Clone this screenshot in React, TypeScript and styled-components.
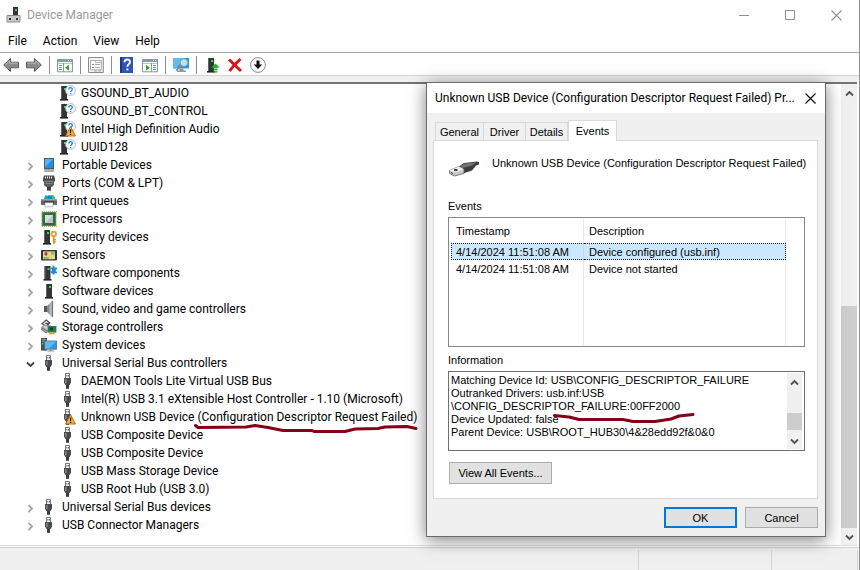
import React, { useState } from "react";
import styled, { createGlobalStyle } from "styled-components";

const UI_FONT = 'Roboto, "Open Sans", sans-serif';
const DIALOG_FONT = '"Liberation Sans", Arial, sans-serif';

const GlobalStyle = createGlobalStyle`
  * { box-sizing: border-box; }
  body { margin: 0; background: #fff; color: #000; font-family: ${UI_FONT}; font-size: 12px; }
  button, textarea, table { font: inherit; color: inherit; }
  svg { display: block; flex: none; }
`;

/* ---------- main window ---------- */

const Window = styled.main`
  position: relative;
  display: flex;
  flex-direction: column;
  min-height: 100vh;
  border-right: 1px solid #8f8f8f;
  overflow: hidden;
`;

const TitleBar = styled.header`
  display: flex;
  align-items: center;
  height: 30px;
  padding-left: 6px;
  gap: 5px;
`;

const AppTitle = styled.h1`
  flex: 1;
  margin: 0;
  font-size: 12px;
  font-weight: 400;
  color: #999;
`;

const CaptionButtons = styled.div`
  display: flex;
`;

const CaptionButton = styled.button`
  display: grid;
  place-items: center;
  width: 46px;
  height: 28px;
  padding: 0;
  border: 0;
  background: none;
  color: #909090;
`;

const MenuBar = styled.nav`
  display: flex;
  align-items: center;
  height: 22px;
  padding-left: 8px;
  gap: 16px;
`;

const MenuButton = styled.button`
  padding: 0;
  border: 0;
  background: none;
  line-height: 16px;
`;

const ToolBar = styled.div`
  display: flex;
  align-items: center;
  height: 24px;
  padding: 2px 0 0 3px;
  gap: 7px;
  border-top: 1px solid #a6a6a6;
  border-bottom: 1px solid #d4d4d4;
`;

const ToolButton = styled.button`
  width: 16px;
  height: 18px;
  padding: 1px 0;
  border: 0;
  background: none;
`;

const ToolSeparator = styled.span`
  width: 1px;
  height: 18px;
  background: #8c8c8c;
`;

const Content = styled.section`
  display: flex;
  flex: 1;
  margin-right: 2px;
  border-top: 2px solid #747474;
  border-bottom: 1px solid #dcdcdc;
`;

const Rebar = styled.div`
  height: 6px;
  background: #f0f0f0;
`;

const Tree = styled.ul`
  flex: 1;
  min-width: 0;
  margin: 0;
  padding: 0 0 11px;
  list-style: none;
`;

const TreeItem = styled.li<{ $child?: boolean }>`
  display: flex;
  align-items: center;
  height: 18px;
  padding-left: ${(p) => (p.$child ? 60 : 24)}px;
  white-space: nowrap;
  line-height: 18px;
`;

const Expander = styled.button`
  display: grid;
  place-items: center;
  width: 12px;
  height: 16px;
  margin-right: 5px;
  padding: 2px 0 0;
  border: 0;
  background: none;
`;

const ItemLabel = styled.span`
  position: relative;
  padding-left: 5px;
`;

const InkMark = styled.svg<{ $left: number; $top: number }>`
  position: absolute;
  left: ${(p) => p.$left}px;
  top: ${(p) => p.$top}px;
  overflow: visible;
  pointer-events: none;
  z-index: 1;
`;

const ScrollBar = styled.div<{ $dialog?: boolean }>`
  display: flex;
  flex-direction: column;
  width: ${(p) => (p.$dialog ? 15 : 16)}px;
  background: #f0f0f0;
`;

const ScrollArrow = styled.button`
  display: grid;
  place-items: center;
  height: 17px;
  padding: 2px 0 0;
  border: 0;
  background: none;
`;

const ScrollTrack = styled.div<{ $before: number; $after?: number }>`
  display: flex;
  flex: 1;
  flex-direction: column;
  &::before { content: ""; flex: ${(p) => p.$before} 0 0; }
  &::after { content: ""; flex: ${(p) => p.$after ?? 0} 0 0; }
`;

const ScrollThumb = styled.div<{ $size: number }>`
  flex: ${(p) => p.$size} 0 0;
  background: #cdcdcd;
`;

const StatusBar = styled.footer`
  display: grid;
  grid-template-columns: 1fr 133px 86px;
  height: 24px;
  margin-top: 1px;
  padding: 2px 1px 0 0;
  border-top: 1px solid #d0d0d0;
  background: #f0f0f0;
`;

const StatusPane = styled.div`
  border-right: 1px solid #d4d4d4;
`;

/* ---------- properties dialog ---------- */

const Dialog = styled.section`
  position: absolute;
  top: 82px;
  right: 33px;
  width: 400px;
  border: 1px solid #6b6b6b;
  background: #f0f0f0;
  box-shadow: 0 3px 16px rgba(0, 0, 0, 0.5);
  font-family: ${DIALOG_FONT};
  font-size: 11px;
`;

const DialogTitleBar = styled.header`
  display: flex;
  align-items: center;
  height: 30px;
  padding-left: 8px;
  background: #fff;
  font-family: ${UI_FONT};
`;

const DialogTitle = styled.h2`
  flex: 1;
  margin: 0;
  font-size: 12px;
  font-weight: 400;
  white-space: nowrap;
`;

const DialogClose = styled.button`
  display: grid;
  place-items: center;
  width: 30px;
  height: 28px;
  padding: 0;
  border: 0;
  background: none;
  color: #000;
`;

const DialogBody = styled.div`
  padding: 7px 7px 8px 6px;
`;

const Tabs = styled.div`
  display: flex;
  align-items: flex-end;
  height: 20px;
  padding-left: 2px;
`;

const Tab = styled.button<{ $active: boolean; $wide?: boolean }>`
  position: relative;
  width: ${(p) => (p.$active || p.$wide ? 49 : 42)}px;
  height: ${(p) => (p.$active ? 21 : 18)}px;
  margin-bottom: ${(p) => (p.$active ? -1 : 0)}px;
  padding: 0;
  border: 1px solid #d9d9d9;
  border-bottom: 0;
  border-left-width: ${(p) => (p.$active || p.$wide ? 1 : 0)}px;
  background: ${(p) => (p.$active ? "#fff" : "#f0f0f0")};
  white-space: nowrap;
`;

const TabPanel = styled.div`
  padding: 14px 12px 14px 14px;
  border: 1px solid #d9d9d9;
  background: #fff;
`;

const DeviceHeader = styled.div`
  display: flex;
  gap: 12px;
  height: 44px;
`;

const DeviceName = styled.p`
  margin: 0;
  line-height: 16px;
  white-space: nowrap;
`;

const FieldLabel = styled.label`
  display: block;
  height: 18px;
  line-height: 14px;
`;

const EventsBox = styled.div`
  height: 130px;
  margin-bottom: 6px;
  padding: 1px 0 1px 2px;
  border: 1px solid #828790;
`;

const EventsTable = styled.table`
  width: 100%;
  height: 100%;
  border-collapse: separate;
  border-spacing: 0;
  table-layout: fixed;
  th, td {
    padding: 0 0 0 5px;
    text-align: left;
    font-weight: 400;
    white-space: nowrap;
    vertical-align: middle;
  }
  th:not(:last-child), td:not(:last-child) { border-right: 1px solid #e5ebf2; }
`;

const HeadRow = styled.tr`
  height: 24px;
`;

const EventRow = styled.tr<{ $selected: boolean }>`
  height: 17px;
  td:not(:last-child) {
    background: ${(p) => (p.$selected ? "#cce8ff" : "none")};
    ${(p) => p.$selected && "border-top: 1px dotted #222; border-bottom: 1px dotted #222;"}
  }
  td:first-child { ${(p) => p.$selected && "border-left: 1px dotted #222; padding-left: 4px; border-right-color: #b8dcfa;"} }
  td:nth-child(2) { ${(p) => p.$selected && "border-right: 1px dotted #222;"} }
`;

const InfoBox = styled.div`
  position: relative;
  display: flex;
  height: 80px;
  margin-bottom: 11px;
  padding: 1px 2px 1px 0;
  border: 1px solid #6f6f6f;
`;

const InfoText = styled.textarea`
  flex: 1;
  min-width: 0;
  margin: 0;
  padding: 1px 2px;
  border: 0;
  outline: 0;
  resize: none;
  overflow: hidden;
  background: none;
  line-height: 13px;
  white-space: pre;
`;

const PushButton = styled.button<{ $default?: boolean; $wide?: boolean }>`
  width: ${(p) => (p.$wide ? 103 : 73)}px;
  height: ${(p) => (p.$wide ? 22 : 21)}px;
  margin-left: ${(p) => (p.$wide ? 1 : 0)}px;
  padding: 0;
  border: ${(p) => (p.$default ? "2px solid #0078d7" : "1px solid #adadad")};
  background: #e1e1e1;
`;

const DialogActions = styled.footer`
  display: flex;
  justify-content: flex-end;
  gap: 8px;
  padding-top: 8px;
`;

/* ---------- icons ---------- */

const Icon = ({ children, size = 16 }: { children: React.ReactNode; size?: number }) => (
  <svg width={size} height={size} viewBox="0 0 16 16" aria-hidden="true">{children}</svg>
);

const Tower = ({ x = 0 }: { x?: number }) => (
  <g transform={`translate(${x} 0)`}>
    <path d="M1 1h6v13H1z" fill="#343434" />
    <path d="M1 1h1v13H1z" fill="#666" />
    <path d="M0 14h8v1.6H0z" fill="#242424" />
    <path d="M4 3h2v2H4z" fill="#2fe04a" />
  </g>
);

const WarningBadge = () => (
  <g>
    <path d="M10.5 5.6l5 9.4h-10z" fill="#f8b32b" stroke="#a06a10" strokeWidth=".9" strokeLinejoin="round" />
    <path d="M9.8 8.6h1.5l-.3 3.4h-.9zM9.8 12.7h1.5V14H9.8z" fill="#1b1208" />
  </g>
);

const QuestionBadge = () => (
  <g>
    <circle cx="10.5" cy="5.5" r="4.9" fill="#fff" stroke="#a9b0b6" strokeWidth=".9" />
    <path d="M8.8 4.4c0-2.3 3.5-2.3 3.5-.1 0 1.4-1.7 1.3-1.7 2.7" fill="none" stroke="#1b7fd0" strokeWidth="1.3" />
    <path d="M9.9 7.9h1.4v1.3H9.9z" fill="#1b7fd0" />
  </g>
);

const UsbPlug = () => (
  <g>
    <path d="M5.5.5h4v5h-4z" fill="#f4f4f4" stroke="#777" />
    <path d="M6.5 2h.8v1.4h-.8zM8 2h.8v1.4H8z" fill="#444" />
    <path d="M4 5h7v4.5L9.6 12H5.4L4 9.5z" fill="#4b4b4b" />
    <path d="M5 6h1.6v4H5z" fill="#858585" />
    <path d="M6 12h3v3.8H6z" fill="#3b3b3b" />
  </g>
);

type IconName =
  | "unknown" | "unknownWarn" | "portable" | "ports" | "printer" | "cpu" | "security" | "sensor"
  | "component" | "software" | "sound" | "storage" | "system" | "usb" | "usbWarn";

const icons: Record<IconName, React.ReactNode> = {
  unknown: <><Tower /><QuestionBadge /></>,
  unknownWarn: <><Tower /><QuestionBadge /><WarningBadge /></>,
  portable: (
    <>
      <path d="M3 1h10v14H3z" fill="#53585c" />
      <path d="M4 2h8v9H4z" fill="#1f8fe8" />
      <path d="M4 2h8L4 10z" fill="#52b4fa" />
      <path d="M3 12h10v3H3z" fill="#b5b8ba" />
      <path d="M5 12v3M8 12v3M11 12v3" stroke="#83878a" strokeWidth=".7" />
    </>
  ),
  ports: (
    <>
      <path d="M3 .5h10l1 3v3H2v-3z" fill="#4a4a4a" />
      <path d="M4.500 1.500v2M6.500 1.500v2M8.500 1.500v2M10.500 1.500v2" stroke="#e4e4e4" />
      <path d="M3 5h10v5l-2 2H5l-2-2z" fill="#5b5b5b" />
      <path d="M4 6.500h8M4 8.500h8" stroke="#8b8b8b" strokeWidth=".8" />
      <path d="M6 12h4v3.600H6z" fill="#3d3d3d" />
    </>
  ),
  printer: (
    <>
      <path d="M4 2.600h9l1 3.400H3z" fill="#13a9b8" />
      <path d="M7 2.600h4V6H7z" fill="#1683e0" />
      <path d="M11 2.600h2l1 3.400h-3z" fill="#52c832" />
      <path d="M0 6h16v6H0z" fill="#66686a" />
      <path d="M0 6h16v1.400H0z" fill="#9ea1a3" />
      <path d="M3 8.500h10V10H3z" fill="#27292a" />
      <path d="M4 9.600h8v4.200H4z" fill="#fff" stroke="#8c8c8c" strokeWidth=".6" />
    </>
  ),
  cpu: (
    <>
      <path d="M.8.8h14.400v14.400H.8z" fill="none" stroke="#c99d38" strokeWidth="1.400" strokeDasharray="1 1" />
      <path d="M1.200 1.200h13.600v13.600H1.200z" fill="#2c6a49" />
      <path d="M4 4h8v8H4z" fill="#d9dddb" />
      <path d="M4 12l8-8v8z" fill="#bcc3c0" />
    </>
  ),
  security: (
    <>
      <Tower x={2} />
      <circle cx="12.700" cy="5" r="2.300" fill="none" stroke="#e2a33c" strokeWidth="1.900" />
      <path d="M11.800 7.500h1.900v7l-.9 1-.9-1zM13.700 10h1.300v1.300h-1.300zM13.700 12.200h1.300v1.300h-1.300z" fill="#d8942d" />
    </>
  ),
  sensor: (
    <>
      <rect y="3" width="16" height="10.600" rx="1" fill="#343434" />
      <path d="M2 4.400h12v7.800H2z" fill="#d8dba0" />
      <path d="M10 4.800h3.600v3H10zM2.400 10h5.400v2H2.400z" fill="#8fbc77" />
      <path d="M2 9h12M9 4.400v7.800" stroke="#f2cf6b" strokeWidth="1.200" />
      <path d="M5 5.200c2.200 0 2 2 0 4-2-2-2.200-4 0-4z" fill="#c33434" />
    </>
  ),
  component: (
    <>
      <Tower x={2.5} />
      <path d="M9.500 2.400h2V.8h2v1.600H16v2h-1.200v2H16v1.900h-2.400V9.500h-2V8.300h-2v-2h1.200v-2H9.500z" fill="#2489d6" />
    </>
  ),
  software: <Tower x={4} />,
  sound: (
    <>
      <path d="M3 5h3v6H3z" fill="#55595c" />
      <path d="M6 5l5-4.700v15.400L6 11z" fill="#85898d" />
      <path d="M8.400 2.800L11 .3v15.400l-2.600-2.500z" fill="#b5b8ba" />
      <path d="M11.500 0v16" stroke="#707477" strokeWidth="1.200" />
    </>
  ),
  storage: (
    <>
      <path d="M1 4.700L5.200 1l3.400 2.800L5 7.200z" fill="#f5f5f5" stroke="#4b4b4b" strokeWidth="1.200" />
      <path d="M4.200 4.300h4L6.500 6" fill="none" stroke="#4b4b4b" strokeWidth="1.200" />
      <path d="M.6 8.500l5.700 3.600L5.400 14 .6 11z" fill="#a4a6a7" stroke="#525252" strokeWidth=".7" />
      <path d="M1 8l3-2 6 1v4l-3 1z" fill="#cfd1d2" stroke="#666" strokeWidth=".6" />
      <path d="M6.600 7h8.800v6.600H6.600z" fill="#2c7b54" />
      <path d="M9 8.600h3v2.600H9z" fill="#173c2b" />
      <path d="M7.800 13.500h5.800v1.800H7.800z" fill="#e0a52d" />
    </>
  ),
  system: (
    <>
      <path d="M0 1h6v12.600H0z" fill="#4b4f52" />
      <path d="M1 2.400h4M1 4.400h4" stroke="#b3b7b9" strokeWidth=".8" />
      <path d="M1 6h1.400v1.400H1z" fill="#31d44a" />
      <path d="M3.500 4h12.300v8.200H3.500z" fill="#2f97e8" stroke="#5b666d" strokeWidth=".8" />
      <path d="M4 4.500h11L7.500 11.800H4z" fill="#5dbaf8" />
      <path d="M8.700 12.400h2v1.200h2.500v.9H6.200v-.9h2.500z" fill="#8c9194" />
    </>
  ),
  usb: <UsbPlug />,
  usbWarn: <><UsbPlug /><WarningBadge /></>,
};

const Chevron = ({ dir, color = "#505050" }: { dir: "up" | "down" | "right"; color?: string }) => (
  <svg width="9" height="9" viewBox="0 0 9 9" aria-hidden="true">
    <path
      d={{ up: "M1 6.5L4.5 3 8 6.5", down: "M1 2.5L4.5 6 8 2.5", right: "M2.5 1L6 4.5 2.5 8" }[dir]}
      fill="none" stroke={color} strokeWidth="1.8"
    />
  </svg>
);

const CloseGlyph = () => (
  <svg width="11" height="11" viewBox="0 0 11 11" aria-hidden="true">
    <path d="M.5.5l10 10M10.5.5l-10 10" stroke="currentColor" strokeWidth="1.1" />
  </svg>
);

const Arrow = ({ flip }: { flip?: boolean }) => (
  <Icon>
    <g transform={flip ? "translate(16 0) scale(-1 1)" : undefined}>
      <path d="M.7 8L7.500 1.500v3.700h8v5.600h-8v3.700z" fill="#8b8b8b" stroke="#5a5a5a" strokeLinejoin="round" />
      <path d="M2.400 7.700L6.600 3.800v2.400h8" fill="none" stroke="#b9b9b9" />
    </g>
  </Icon>
);

const PaneWindow = ({ flip }: { flip?: boolean }) => (
  <Icon>
    <path d="M.5 2.500h15v12.300H.5z" fill="#fff" stroke="#8796a4" />
    <path d="M.5 2h15v3H.5z" fill="#8b98a5" />
    <path d="M11 3.500h1M13 3.500h1" stroke="#fff" />
    <path d="M1 6.500h14" stroke="#b9c3cc" />
    <g transform={flip ? "translate(16 0) scale(-1 1)" : undefined}>
      <path d="M6.500 6v8.500" stroke="#8796a4" />
      <path d="M2 8.500h3M2 10.500h3M2 12.500h3" stroke="#6f93b5" />
      <path d="M12 7.700v6L8 10.700z" fill="#3aa32b" />
    </g>
  </Icon>
);

const toolIcons = {
  properties: (
    <Icon>
      <path d="M.5.5h14.800v15H.5z" fill="#f3f3f3" stroke="#8b8b8b" />
      <path d="M2.500 3.500h10.800v9.300H2.500z" fill="#fff" stroke="#a8adb2" />
      <path d="M2.500 3.500h5v2h6" fill="none" stroke="#a9b0b6" />
      <path d="M4 7.500h2M4 10.500h2" stroke="#5d93c4" strokeWidth="1.200" />
      <path d="M7 7.500h5M7 10.500h5" stroke="#a5a5a5" />
      <path d="M6 14h3M10 14h3" stroke="#9f9f9f" />
    </Icon>
  ),
  help: (
    <Icon>
      <path d="M1 0h13v16H1z" fill="#2f55b4" />
      <path d="M1 0h2v16H1z" fill="#1e3a87" />
      <path d="M5.600 5.200c0-3.600 5.400-3.500 5.400-.3 0 2.300-2.600 2.300-2.600 4.900" fill="none" stroke="#fff" strokeWidth="1.900" />
      <path d="M7.400 11.400h2v2h-2z" fill="#fff" />
    </Icon>
  ),
  scan: (
    <Icon>
      <path d="M0 1h16v10.400H0z" fill="#2c92dc" />
      <path d="M0 1h12L3 11.400H0z" fill="#66b9ef" />
      <path d="M6.500 11.400h4v2.200h2.500V15H4v-1.400h2.500z" fill="#8c98a0" />
      <circle cx="11" cy="5.600" r="3.900" fill="#b8e1fa" stroke="#7a99ad" />
      <path d="M8.200 8.400l-5 5.200" stroke="#7b8a94" strokeWidth="1.700" />
    </Icon>
  ),
  update: (
    <Icon>
      <Tower x={3} />
      <path d="M11.500 6.500l4.300 4h-2.300v1h-4v-1H7.200z" fill="#1fb52f" />
      <path d="M9.500 12.700h4M9.500 14.900h4" stroke="#1fb52f" strokeWidth="1.400" />
    </Icon>
  ),
  remove: (
    <Icon>
      <path d="M2 2.500L14 14M13.500 2C9 6 6 9 2.500 14" stroke="#dc1410" strokeWidth="3" fill="none" />
    </Icon>
  ),
  disable: (
    <Icon>
      <circle cx="8" cy="8" r="7.400" fill="#fff" stroke="#8a8a8a" />
      <path d="M6.500 3.500h3v4h2.800L8 12 3.700 7.500h2.800z" fill="#111" />
    </Icon>
  ),
};

const tools: { label: string; icon: React.ReactNode; separator?: boolean }[] = [
  { label: "Back", icon: <Arrow /> },
  { label: "Forward", icon: <Arrow flip />, separator: true },
  { label: "Show/Hide Console Tree", icon: <PaneWindow />, separator: true },
  { label: "Properties", icon: toolIcons.properties, separator: true },
  { label: "Help", icon: toolIcons.help },
  { label: "Show/Hide Action Pane", icon: <PaneWindow flip />, separator: true },
  { label: "Scan for hardware changes", icon: toolIcons.scan, separator: true },
  { label: "Update driver", icon: toolIcons.update },
  { label: "Uninstall device", icon: toolIcons.remove },
  { label: "Disable device", icon: toolIcons.disable },
];

/* ---------- data ---------- */

type Node = { label: string; icon: IconName; child?: boolean; open?: boolean; marked?: boolean };

const nodes: Node[] = [
  { label: "GSOUND_BT_AUDIO", icon: "unknown", child: true },
  { label: "GSOUND_BT_CONTROL", icon: "unknown", child: true },
  { label: "Intel High Definition Audio", icon: "unknownWarn", child: true },
  { label: "UUID128", icon: "unknown", child: true },
  { label: "Portable Devices", icon: "portable" },
  { label: "Ports (COM & LPT)", icon: "ports" },
  { label: "Print queues", icon: "printer" },
  { label: "Processors", icon: "cpu" },
  { label: "Security devices", icon: "security" },
  { label: "Sensors", icon: "sensor" },
  { label: "Software components", icon: "component" },
  { label: "Software devices", icon: "software" },
  { label: "Sound, video and game controllers", icon: "sound" },
  { label: "Storage controllers", icon: "storage" },
  { label: "System devices", icon: "system" },
  { label: "Universal Serial Bus controllers", icon: "usb", open: true },
  { label: "DAEMON Tools Lite Virtual USB Bus", icon: "usb", child: true },
  { label: "Intel(R) USB 3.1 eXtensible Host Controller - 1.10 (Microsoft)", icon: "usb", child: true },
  { label: "Unknown USB Device (Configuration Descriptor Request Failed)", icon: "usbWarn", child: true, marked: true },
  { label: "USB Composite Device", icon: "usb", child: true },
  { label: "USB Composite Device", icon: "usb", child: true },
  { label: "USB Mass Storage Device", icon: "usb", child: true },
  { label: "USB Root Hub (USB 3.0)", icon: "usb", child: true },
  { label: "Universal Serial Bus devices", icon: "usb" },
  { label: "USB Connector Managers", icon: "usb" },
];

const events = [
  { time: "4/14/2024 11:51:08 AM", text: "Device configured (usb.inf)" },
  { time: "4/14/2024 11:51:08 AM", text: "Device not started" },
];

const information = [
  "Matching Device Id: USB\\CONFIG_DESCRIPTOR_FAILURE",
  "Outranked Drivers: usb.inf:USB",
  "\\CONFIG_DESCRIPTOR_FAILURE:00FF2000",
  "Device Updated: false",
  "Parent Device: USB\\ROOT_HUB30\\4&28edd92f&0&0",
].join("\n");

const tabNames = ["General", "Driver", "Details", "Events"];

/* ---------- views ---------- */

function PropertiesDialog() {
  const [selected, setSelected] = useState(0);
  return (
    <Dialog role="dialog" aria-labelledby="dialog-title">
      <DialogTitleBar>
        <DialogTitle id="dialog-title">
          Unknown USB Device (Configuration Descriptor Request Failed) Pr...
        </DialogTitle>
        <DialogClose aria-label="Close dialog"><CloseGlyph /></DialogClose>
      </DialogTitleBar>
      <DialogBody>
        <Tabs role="tablist">
          {tabNames.map((name) => (
            <Tab key={name} role="tab" aria-selected={name === "Events"} $active={name === "Events"} $wide={name === "General"}>
              {name}
            </Tab>
          ))}
        </Tabs>
        <TabPanel role="tabpanel">
          <DeviceHeader>
            <svg width="32" height="32" viewBox="0 0 32 32" aria-hidden="true">
              <path d="M10 12l6-4 13-1.500 2 .5v2.500l-3 1-4 5-9 3-6-2z" fill="#3d3d3d" />
              <path d="M12 11l5-2.500 11-1-4 3-10 2.500z" fill="#737373" />
              <path d="M1.500 15.500L11 11.500l5 3v4L6.500 21l-5-2.500z" fill="#c7c7c7" stroke="#666" strokeWidth=".8" />
              <path d="M1.500 15.500l5 2L16 14.500l-5-3z" fill="#f0f0f0" />
              <path d="M6 15l2-.7 1.500.7-2 .7zM3 17.500l2 1" stroke="#333" fill="#333" />
            </svg>
            <DeviceName>Unknown USB Device (Configuration Descriptor Request Failed)</DeviceName>
          </DeviceHeader>
          <FieldLabel as="div" id="events-label">Events</FieldLabel>
          <EventsBox>
            <EventsTable aria-labelledby="events-label">
              <colgroup><col width="133" /><col width="202" /><col /></colgroup>
              <thead>
                <HeadRow><th>Timestamp</th><th>Description</th><th aria-hidden="true" /></HeadRow>
              </thead>
              <tbody>
                {events.map((e, i) => (
                  <EventRow key={i} $selected={i === selected} onClick={() => setSelected(i)}>
                    <td>{e.time}</td><td>{e.text}</td><td />
                  </EventRow>
                ))}
                <tr><td /><td /><td /></tr>
              </tbody>
            </EventsTable>
          </EventsBox>
          <FieldLabel htmlFor="information">Information</FieldLabel>
          <InfoBox>
            <InfoText id="information" readOnly value={information} />
            <InkMark $left={104} $top={42} width="140" height="8" viewBox="0 0 140 8">
              <path d="M1.500 1.500L16 3l10 2.500h44l10 2h22l16-2.500 8-3 14-1.500" fill="none" stroke="#850016" strokeWidth="3" strokeLinecap="round" strokeLinejoin="round" />
            </InkMark>
            <ScrollBar $dialog>
              <ScrollArrow aria-label="Scroll up"><Chevron dir="up" /></ScrollArrow>
              <ScrollTrack $before={23} $after={2}><ScrollThumb $size={17} /></ScrollTrack>
              <ScrollArrow aria-label="Scroll down"><Chevron dir="down" /></ScrollArrow>
            </ScrollBar>
          </InfoBox>
          <PushButton $wide>View All Events...</PushButton>
        </TabPanel>
        <DialogActions>
          <PushButton $default>OK</PushButton>
          <PushButton>Cancel</PushButton>
        </DialogActions>
      </DialogBody>
    </Dialog>
  );
}

export default function App() {
  return (
    <>
      <GlobalStyle />
      <Window>
        <TitleBar>
          <Icon>
            <path d="M7 0h5v9H7z" fill="#343434" />
            <path d="M9 2h2v2H9z" fill="#2fd449" />
            <path d="M1 8.500h13V15H1z" fill="#c9c9c9" stroke="#8b8b8b" />
            <path d="M3 11h2v2H3zM10 11h2v2h-2z" fill="#333" />
          </Icon>
          <AppTitle>Device Manager</AppTitle>
          <CaptionButtons>
            <CaptionButton aria-label="Minimize">
              <svg width="10" height="10"><path d="M0 5.500h10" stroke="currentColor" /></svg>
            </CaptionButton>
            <CaptionButton aria-label="Maximize">
              <svg width="10" height="10"><path d="M.5.5h9v9h-9z" fill="none" stroke="currentColor" /></svg>
            </CaptionButton>
            <CaptionButton aria-label="Close"><CloseGlyph /></CaptionButton>
          </CaptionButtons>
        </TitleBar>
        <MenuBar>
          {["File", "Action", "View", "Help"].map((m) => <MenuButton key={m}>{m}</MenuButton>)}
        </MenuBar>
        <ToolBar role="toolbar">
          {tools.map((t) => (
            <React.Fragment key={t.label}>
              <ToolButton aria-label={t.label}>{t.icon}</ToolButton>
              {t.separator && <ToolSeparator />}
            </React.Fragment>
          ))}
        </ToolBar>
        <Rebar />
        <Content>
          <Tree role="tree">
            {nodes.map((n, i) => (
              <TreeItem key={i} role="treeitem" $child={n.child}>
                {!n.child && (
                  <Expander aria-label={`${n.open ? "Collapse" : "Expand"} ${n.label}`}>
                    <Chevron dir={n.open ? "down" : "right"} color={n.open ? "#404040" : "#a6a6a6"} />
                  </Expander>
                )}
                <Icon>{icons[n.icon]}</Icon>
                <ItemLabel>
                  {n.label}
                  {n.marked && (
                    <InkMark $left={118} $top={16} width="224" height="8" viewBox="0 0 224 8">
                      <path d="M1.500 1.500L4 3.500 52 3l9-1.500 13 2 15 3h29l2 1h31l10-2.500 23-.5 7-1.500 22-.5 9 2" fill="none" stroke="#850016" strokeWidth="3" strokeLinecap="round" strokeLinejoin="round" />
                    </InkMark>
                  )}
                </ItemLabel>
              </TreeItem>
            ))}
          </Tree>
          <ScrollBar>
            <ScrollArrow aria-label="Scroll up"><Chevron dir="up" /></ScrollArrow>
            <ScrollTrack $before={205}><ScrollThumb $size={222} /></ScrollTrack>
            <ScrollArrow aria-label="Scroll down"><Chevron dir="down" /></ScrollArrow>
          </ScrollBar>
        </Content>
        <StatusBar><StatusPane /><StatusPane /><StatusPane /></StatusBar>
        <PropertiesDialog />
      </Window>
    </>
  );
}
